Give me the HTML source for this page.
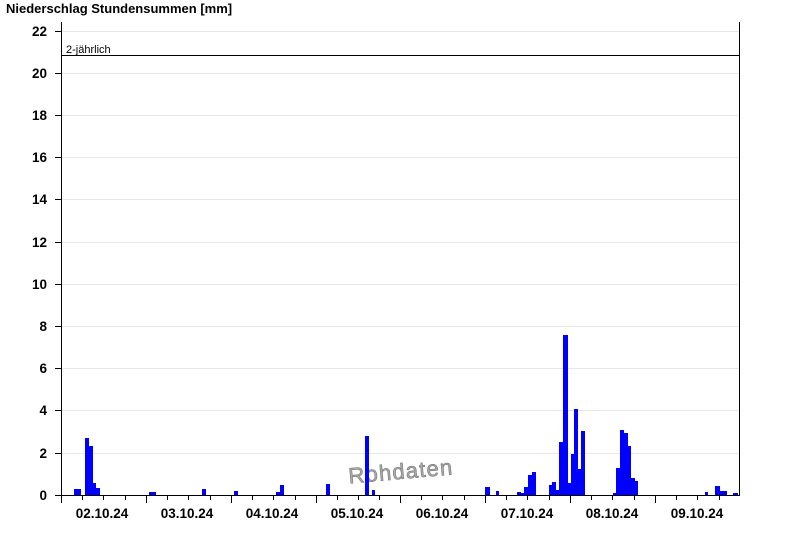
<!DOCTYPE html>
<html><head><style>body{margin:0;background:#fff}svg{display:block}</style></head><body>
<svg width="800" height="550" xmlns="http://www.w3.org/2000/svg" font-family="Liberation Sans, Arial, sans-serif">
<text x="6" y="13" font-size="13" font-weight="bold">Niederschlag Stundensummen [mm]</text>
<g stroke="#e8e8e8" stroke-width="1">
<line x1="61" x2="740" y1="31.5" y2="31.5"/><line x1="61" x2="740" y1="73.5" y2="73.5"/><line x1="61" x2="740" y1="115.5" y2="115.5"/><line x1="61" x2="740" y1="157.5" y2="157.5"/><line x1="61" x2="740" y1="199.5" y2="199.5"/><line x1="61" x2="740" y1="242.5" y2="242.5"/><line x1="61" x2="740" y1="284.5" y2="284.5"/><line x1="61" x2="740" y1="326.5" y2="326.5"/><line x1="61" x2="740" y1="368.5" y2="368.5"/><line x1="61" x2="740" y1="410.5" y2="410.5"/><line x1="61" x2="740" y1="453.5" y2="453.5"/>
</g>
<g font-size="13.5" font-weight="bold" text-anchor="end">
<text x="47" y="36">22</text><text x="47" y="78">20</text><text x="47" y="120">18</text><text x="47" y="162">16</text><text x="47" y="204">14</text><text x="47" y="247">12</text><text x="47" y="289">10</text><text x="47" y="331">8</text><text x="47" y="373">6</text><text x="47" y="415">4</text><text x="47" y="458">2</text><text x="47" y="500">0</text>
</g>
<g stroke="#000" stroke-width="1">
<line x1="55" x2="61" y1="31.5" y2="31.5"/><line x1="55" x2="61" y1="73.5" y2="73.5"/><line x1="55" x2="61" y1="115.5" y2="115.5"/><line x1="55" x2="61" y1="157.5" y2="157.5"/><line x1="55" x2="61" y1="199.5" y2="199.5"/><line x1="55" x2="61" y1="242.5" y2="242.5"/><line x1="55" x2="61" y1="284.5" y2="284.5"/><line x1="55" x2="61" y1="326.5" y2="326.5"/><line x1="55" x2="61" y1="368.5" y2="368.5"/><line x1="55" x2="61" y1="410.5" y2="410.5"/><line x1="55" x2="61" y1="453.5" y2="453.5"/>
</g>
<text x="348" y="479" font-size="22" fill="#aaa" stroke="#777" stroke-width="0.6" transform="rotate(-5 400 468)" textLength="104">Rohdaten</text>
<g fill="#0000ff">
<rect x="74" y="489" width="7" height="6"/>
<rect x="85" y="438" width="4" height="57"/><rect x="89" y="446" width="4" height="49"/><rect x="93" y="483" width="3" height="12"/><rect x="96" y="488" width="4" height="7"/>
<rect x="149" y="492" width="7" height="3"/>
<rect x="202" y="489" width="4" height="6"/>
<rect x="234" y="491" width="4" height="4"/>
<rect x="276" y="492" width="4" height="3"/><rect x="280" y="485" width="4" height="10"/>
<rect x="326" y="484" width="4" height="11"/>
<rect x="365" y="436" width="4" height="59"/><rect x="372" y="490" width="3" height="5"/>
<rect x="485" y="487" width="5" height="8"/>
<rect x="496" y="491" width="3" height="4"/>
<rect x="517" y="492" width="4" height="3"/><rect x="521" y="493" width="3" height="2"/><rect x="524" y="487" width="4" height="8"/><rect x="528" y="475" width="4" height="20"/><rect x="532" y="472" width="4" height="23"/>
<rect x="549" y="485" width="3" height="10"/><rect x="552" y="482" width="4" height="13"/><rect x="556" y="490" width="3" height="5"/><rect x="559" y="442" width="4" height="53"/><rect x="563" y="335" width="5" height="160"/><rect x="568" y="483" width="3" height="12"/><rect x="571" y="454" width="3" height="41"/><rect x="574" y="409" width="4" height="86"/><rect x="578" y="469" width="3" height="26"/><rect x="581" y="431" width="4" height="64"/>
<rect x="613" y="493" width="3" height="2"/><rect x="616" y="468" width="4" height="27"/><rect x="620" y="430" width="4" height="65"/><rect x="624" y="433" width="4" height="62"/><rect x="628" y="446" width="3" height="49"/><rect x="631" y="478" width="4" height="17"/><rect x="635" y="481" width="3" height="14"/>
<rect x="705" y="492" width="3" height="3"/><rect x="715" y="486" width="5" height="9"/><rect x="720" y="491" width="2" height="4"/><rect x="722" y="491" width="5" height="4"/><rect x="733" y="493" width="5" height="2"/>
</g>
<line x1="61" x2="740" y1="55.5" y2="55.5" stroke="#000"/>
<text x="66" y="53" font-size="11">2-jährlich</text>
<g stroke="#000" stroke-width="1">
<line x1="61.5" x2="61.5" y1="22" y2="503"/>
<line x1="739.5" x2="739.5" y1="22" y2="495"/>
<line x1="55" x2="740" y1="495.5" y2="495.5"/>
<line x1="61.5" x2="61.5" y1="495" y2="503"/><line x1="146.5" x2="146.5" y1="495" y2="503"/><line x1="231.5" x2="231.5" y1="495" y2="503"/><line x1="316.5" x2="316.5" y1="495" y2="503"/><line x1="400.5" x2="400.5" y1="495" y2="503"/><line x1="485.5" x2="485.5" y1="495" y2="503"/><line x1="570.5" x2="570.5" y1="495" y2="503"/><line x1="655.5" x2="655.5" y1="495" y2="503"/>
<line x1="82.5" x2="82.5" y1="495" y2="500"/><line x1="103.5" x2="103.5" y1="495" y2="500"/><line x1="125.5" x2="125.5" y1="495" y2="500"/>
<line x1="167.5" x2="167.5" y1="495" y2="500"/><line x1="188.5" x2="188.5" y1="495" y2="500"/><line x1="210.5" x2="210.5" y1="495" y2="500"/>
<line x1="252.5" x2="252.5" y1="495" y2="500"/><line x1="273.5" x2="273.5" y1="495" y2="500"/><line x1="295.5" x2="295.5" y1="495" y2="500"/>
<line x1="337.5" x2="337.5" y1="495" y2="500"/><line x1="358.5" x2="358.5" y1="495" y2="500"/><line x1="379.5" x2="379.5" y1="495" y2="500"/>
<line x1="421.5" x2="421.5" y1="495" y2="500"/><line x1="442.5" x2="442.5" y1="495" y2="500"/><line x1="464.5" x2="464.5" y1="495" y2="500"/>
<line x1="506.5" x2="506.5" y1="495" y2="500"/><line x1="527.5" x2="527.5" y1="495" y2="500"/><line x1="549.5" x2="549.5" y1="495" y2="500"/>
<line x1="591.5" x2="591.5" y1="495" y2="500"/><line x1="612.5" x2="612.5" y1="495" y2="500"/><line x1="634.5" x2="634.5" y1="495" y2="500"/>
<line x1="676.5" x2="676.5" y1="495" y2="500"/><line x1="697.5" x2="697.5" y1="495" y2="500"/><line x1="719.5" x2="719.5" y1="495" y2="500"/>
</g>
<g font-size="13.5" font-weight="bold" text-anchor="middle">
<text x="102" y="518">02.10.24</text><text x="187" y="518">03.10.24</text><text x="272" y="518">04.10.24</text><text x="357" y="518">05.10.24</text><text x="442" y="518">06.10.24</text><text x="527" y="518">07.10.24</text><text x="612" y="518">08.10.24</text><text x="697" y="518">09.10.24</text>
</g>
</svg>
</body></html>
